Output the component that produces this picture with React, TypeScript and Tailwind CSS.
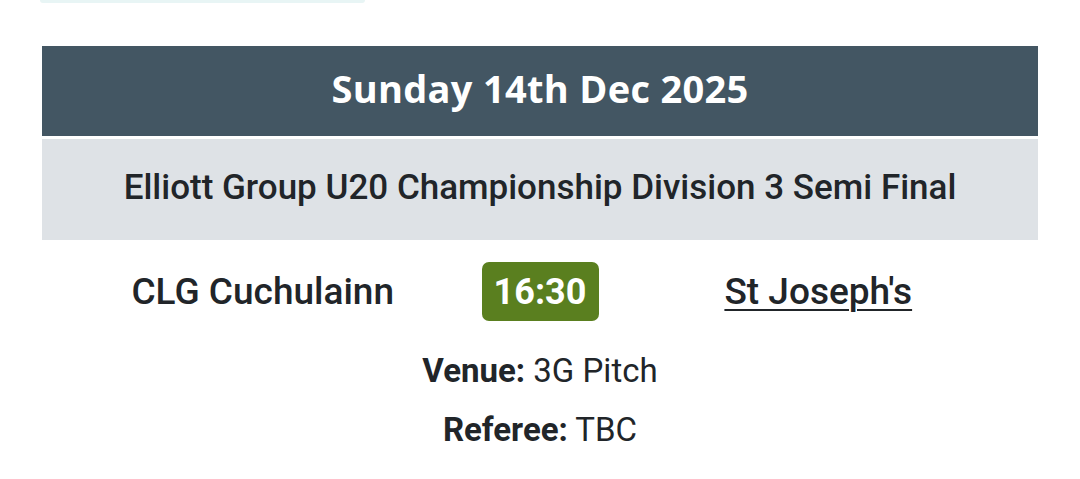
export default function App() {
  return (
    <div className="w-[1080px] h-[479px] bg-white overflow-hidden">
      <div className="ml-[40px] w-[325px] h-[3px] bg-[#e8f5f5] rounded-b-[3px]" />
      <div className="mx-[42px] mt-[43px]">
        <div className="h-[90px] pb-[5px] bg-[#435663] flex items-center justify-center text-white font-bold text-[38px] tracking-[0.3px] font-['Open_Sans',sans-serif]">
          Sunday 14th Dec 2025
        </div>
        <div className="mt-[3px] h-[101px] pb-[2px] bg-[#dee2e6] flex items-center justify-center text-[35px] font-medium text-[#212529] font-['Roboto',sans-serif]">
          Elliott Group U20 Championship Division 3 Semi Final
        </div>
        <div className="grid grid-cols-[1fr_auto_1fr] items-center mt-[22px] text-[#212529] font-['Roboto',sans-serif]">
          <div className="text-center text-[37px] font-medium pl-[2px]">CLG Cuchulainn</div>
          <div className="h-[59px] w-[117px] rounded-[7px] bg-[#5a7f1f] flex items-center justify-center text-white text-[36px] font-bold">16:30</div>
          <div className="text-center text-[37px] font-medium underline decoration-2 underline-offset-[5px]">St Joseph's</div>
        </div>
        <div className="mt-[20px] flex flex-col items-center text-[#212529] text-[33px] font-['Roboto',sans-serif] leading-[59px]">
          <div><span className="font-bold">Venue:</span> 3G Pitch</div>
          <div><span className="font-bold">Referee:</span> TBC</div>
        </div>
      </div>
    </div>
  );
}
